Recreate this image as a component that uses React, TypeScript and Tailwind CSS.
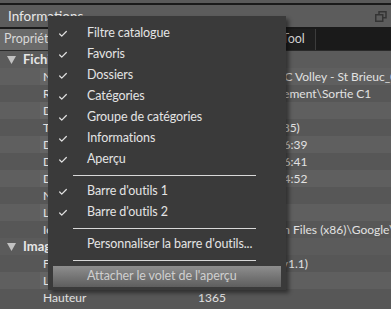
import { Check } from 'lucide-react';

type Row = { label: string; value?: string; section?: boolean };

// Panel rows behind the context menu
const rows: Row[] = [
  { label: 'Fichier', section: true },
  { label: 'Nom', value: 'Tournoi n°2 - ASC Volley - St Brieuc_02.jpg' },
  { label: 'Répertoire', value: 'D:\\Photos\\Evènement\\Sortie C1' },
  { label: 'Dossier' },
  { label: 'Taille', value: '2,4 Mo (2 504 385)' },
  { label: 'Date de création', value: '14/10/2019 à 16:39' },
  { label: 'Date de modification', value: '14/10/2019 à 16:41' },
  { label: 'Date de prise de vue', value: '13/10/2019 à 14:52' },
  { label: 'Note' },
  { label: 'Libellé' },
  { label: 'Icône', value: 'Lien : C:\\Program Files (x86)\\Google\\Picasa3\\Picasa3.exe' },
  { label: 'Image', section: true },
  { label: 'Format', value: 'JPEG/Exif (JFIF v1.1)' },
  { label: 'Largeur', value: '2048' },
  { label: 'Hauteur', value: '1365' },
];

type MenuItem = { label: string; checked?: boolean; sep?: boolean; active?: boolean };

const menu: MenuItem[] = [
  { label: 'Filtre catalogue', checked: true },
  { label: 'Favoris', checked: true },
  { label: 'Dossiers', checked: true },
  { label: 'Catégories', checked: true },
  { label: 'Groupe de catégories', checked: true },
  { label: 'Informations', checked: true },
  { label: 'Aperçu', checked: true },
  { label: '', sep: true },
  { label: "Barre d'outils 1", checked: true },
  { label: "Barre d'outils 2", checked: true },
  { label: '', sep: true },
  { label: "Personnaliser la barre d'outils..." },
  { label: '', sep: true },
  { label: "Attacher le volet de l'aperçu", active: true },
];

function RestoreIcon() {
  return (
    <svg width="12" height="11" viewBox="0 0 12 11" fill="none" stroke="#343434" strokeWidth="1.5">
      <rect x="4" y="0.75" width="7" height="6" />
      <rect x="0.75" y="3.75" width="7" height="6.5" fill="#5c5c5c" />
    </svg>
  );
}

function Triangle() {
  return (
    <svg width="9" height="8" viewBox="0 0 9 8">
      <path d="M0 0 H9 L4.5 8 Z" fill="#c2c2c2" />
    </svg>
  );
}

export default function App() {
  return (
    <div className="relative w-[391px] h-[309px] overflow-hidden bg-[#575757] font-['Lato',sans-serif] text-[12px]">
      <div className="h-[3px] bg-[#5a5a5a]" />
      <div className="h-[2px] bg-[#1a1a1a]" />
      <div className="h-[22px] bg-[#5c5c5c] flex items-center justify-between pl-2 pr-[4px] text-[13.5px] text-[#e8e8e8]">
        <span>Informations</span>
        <RestoreIcon />
      </div>
      <div className="h-[2px] bg-[#1a1a1a]" />

      {/* Tabs */}
      <div className="h-[21px] bg-[#1a1a1a] flex text-[#d2d2d2]">
        <div className="w-[120px] shrink-0 bg-[#6a6a6a] flex items-center pl-[4px] text-[12.5px] text-[#d8d8d8]">Propriétés</div>
        <div className="w-[80px] shrink-0 flex items-center pl-2">Métadonnées</div>
        <div className="w-[116px] shrink-0 flex items-center pl-[61px] border-r border-[#3c3c3c] bg-[#1e1e1e] text-[12.5px]">ExifTool</div>
      </div>
      <div className="h-[1px] bg-[#2a2a2a]" />

      {/* Property rows */}
      <div className="flex flex-col">
        {rows.map((row, i) =>
          row.section ? (
            <div key={i} className="h-[17px] flex items-center bg-[#5b5b5b] text-[#e6e6e6]">
              <span className="w-[23px] shrink-0 pl-[7px]">
                <Triangle />
              </span>
              <span className="font-bold text-[13px]">{row.label}</span>
            </div>
          ) : (
            <div key={i} className={`h-[17px] flex items-center text-[#e2e2e2] ${i % 2 === 1 ? 'bg-[#5f5f5f]' : ''}`}>
              <div className="w-[40px] shrink-0" />
              <div className={`w-[154px] shrink-0 h-full flex items-center pl-[3px] whitespace-nowrap overflow-hidden ${i % 2 === 1 ? 'bg-[#646464]' : ''}`}>
                {row.label}
              </div>
              <div className="pl-[4px] whitespace-nowrap">{row.value}</div>
            </div>
          )
        )}
      </div>

      {/* Context menu */}
      <div className="absolute left-[48px] top-[16px] w-[238px] h-[274px] bg-[#3a3a3a] pt-[7px] px-[5px] shadow-[3px_3px_4px_rgba(0,0,0,0.45)] text-[#e4e4e4] text-[12.5px]">
        {menu.map((item, i) =>
          item.sep ? (
            <div key={i} className="h-[11px] flex items-center pl-[20px] pr-[25px]">
              <div className="h-[1px] w-full bg-[#d8d8d8]" />
            </div>
          ) : (
            <div
              key={i}
              className={`h-[21px] flex items-center ${item.active ? 'bg-gradient-to-b from-[#8e8e8e] to-[#5e5e5e] text-[#cfcfcf]' : ''}`}
            >
              <div className="w-[34px] shrink-0 pl-[5px]">
                {item.checked && <Check size={10} strokeWidth={3} color="#e0e0e0" />}
              </div>
              <span className="tracking-[-0.1px]">{item.label}</span>
            </div>
          )
        )}
      </div>
    </div>
  );
}
